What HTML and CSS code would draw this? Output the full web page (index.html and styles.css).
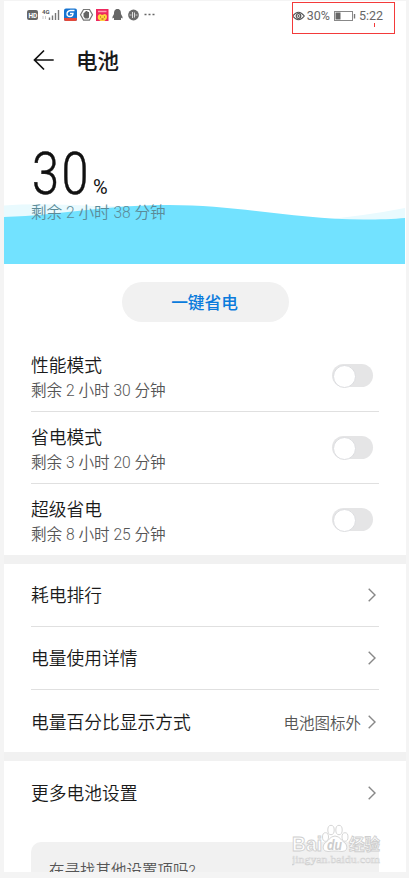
FILE: index.html
```html
<!DOCTYPE html>
<html lang="zh-CN">
<head>
  <meta charset="UTF-8">
  <meta name="viewport" content="width=device-width, initial-scale=1.0">
  <title>电池</title>
  <link rel="stylesheet" href="styles.css">
</head>
<body>
<div class="screen">

  <div class="status">
    <svg class="status-icons" width="130" height="16" viewBox="0 0 130 16">
      <rect x="0" y="3" width="11" height="10" rx="2" fill="#666"/>
      <text x="1.4" y="10.8" class="hd">HD</text>
      <text x="15" y="6.5" class="net">4G</text>
      <path d="M16 9v3M18.5 9v3" stroke="#ccc"/>
      <path d="M22.5 10.5v2.5M25.5 8.5v4.5M28.5 6v7M31.5 3v10" stroke="#777" stroke-width="1.4"/>
      <rect x="37" y="1.500" width="13" height="12.500" rx="2" fill="#1674d1"/>
      <path d="M37 11h13v1.500q0 1.500-2 1.500h-9q-2 0-2-1.500z" fill="#e2493b"/>
      <path d="M47.500 3.500h-4q-3.500.5-3.500 3.500 0 2.500 3 2.500 3 0 3-3h-3" fill="none" stroke="#fff" stroke-width="1.300"/>
      <path d="M56.500 2.500h6l3 5.300-3 5.300h-6l-3-5.300z" fill="none" stroke="#777" stroke-width="1.200"/>
      <path d="M56.500 6h1V5h1V4h2v1h1.500v5.500l-1 1h-3l-1.500-2z" fill="#666"/>
      <rect x="69" y="2" width="12.500" height="12" fill="#ee285f"/>
      <path d="M71 4.500h8.500" stroke="#ff9fb4" stroke-width="1.500"/>
      <path d="M71 12q-1-4 2-5l2 1 3-1q3 1 1.500 5l-2 2h-4z" fill="#ffd43d"/>
      <path d="M73 10h1M77 10h1M74.500 12h2" stroke="#a34917"/>
      <path d="M90.500 2c-3 0-3.500 2.500-3.500 5q-2 3-1.500 4.500l1.500-.8v2.300h7v-2.300l1.500.8Q96 10 94 7c0-2.500-.5-5-3.500-5z" fill="#666"/>
      <circle cx="106.500" cy="8" r="5.400" fill="#6b6b6b"/>
      <path d="M102.500 8h2M108.500 8h2" stroke="#ccc"/>
      <path d="M105.500 5v6M107.500 5.500v5" stroke="#ddd"/>
      <path d="M117.500 7.500h2M121.500 7.500h2M125.500 7.500h2" stroke="#666" stroke-width="1.700"/>
    </svg>
    <div class="status-right">
      <svg width="13" height="12" viewBox="0 0 13 12" fill="none" stroke="#555">
        <path d="M.7 6Q6.500-1.500 12.300 6 6.500 13.500.7 6z" stroke-width="1.200"/>
        <circle cx="6.500" cy="6" r="2.300" stroke-width="1.200"/>
        <circle cx="6.500" cy="6" r="1" fill="#555" stroke="none"/>
      </svg>
      <span class="percent">30%</span>
      <svg width="22" height="10" viewBox="0 0 22 10">
        <rect x=".5" y=".5" width="18" height="9" fill="#fff" stroke="#888"/>
        <path d="M1.500 1.500h5v7h-5z" fill="#666"/>
        <path d="M20.500 3v4.500" stroke="#777" stroke-width="1.400"/>
      </svg>
      <span class="clock">5:22</span>
    </div>
    <div class="mark"></div>
  </div>

  <header class="header">
    <svg width="22" height="22" viewBox="0 0 22 22" fill="none" stroke="#111" stroke-width="1.700">
      <path d="M20.700 11H2M11 1.500L1.500 11l9.500 9.500"/>
    </svg>
    <h1>电池</h1>
  </header>

  <section class="level">
    <svg class="wave" width="401" height="64" viewBox="0 0 401 64">
      <path d="M0 5.500Q35 3 90 6l76 1L0 22z" fill="#e9fafe"/>
      <path d="M315 20Q360 16 401 8v14h-86z" fill="#e9fafe"/>
      <path d="M0 17C60 15 100 5 165 5 235 5 290 19.500 360 19.500 375 19.500 390 19 401 18V64H0z" fill="#72e2ff"/>
    </svg>
    <div class="number"><span class="big">30</span><span class="unit">%</span></div>
    <div class="left">剩余 2 小时 38 分钟</div>
  </section>

  <section class="modes">
    <button class="save">一键省电</button>
    <div class="mode">
      <div class="info">
        <div class="name">性能模式</div>
        <div class="time">剩余 2 小时 30 分钟</div>
      </div>
      <span class="switch"></span>
    </div>
    <div class="mode">
      <div class="info">
        <div class="name">省电模式</div>
        <div class="time">剩余 3 小时 20 分钟</div>
      </div>
      <span class="switch"></span>
    </div>
    <div class="mode">
      <div class="info">
        <div class="name">超级省电</div>
        <div class="time">剩余 8 小时 25 分钟</div>
      </div>
      <span class="switch"></span>
    </div>
  </section>

  <section class="list">
    <div class="row">
      <span class="name">耗电排行</span>
      <svg class="arrow" viewBox="0 0 8 14"><path d="M.7.700L7 7 .7 13.300"/></svg>
    </div>
    <div class="row">
      <span class="name">电量使用详情</span>
      <svg class="arrow" viewBox="0 0 8 14"><path d="M.7.700L7 7 .7 13.300"/></svg>
    </div>
    <div class="row last">
      <span class="name">电量百分比显示方式</span>
      <span class="value">电池图标外</span>
      <svg class="arrow" viewBox="0 0 8 14"><path d="M.7.700L7 7 .7 13.300"/></svg>
    </div>
  </section>

  <section class="list">
    <div class="row last">
      <span class="name">更多电池设置</span>
      <svg class="arrow" viewBox="0 0 8 14"><path d="M.7.700L7 7 .7 13.300"/></svg>
    </div>
    <div class="hint">在寻找其他设置项吗?</div>
  </section>

  <svg class="watermark" width="92" height="44" viewBox="0 0 92 44">
    <g fill="#fff" stroke="#d6d6d6">
      <path d="M43 12q4 0 6.500 4l4.500 4q3 7-4 7.500-4-.5-7-.5t-7 .5q-7-.5-4-7.500l4.500-4q2.500-4 6.500-4z"/>
      <ellipse cx="33.500" cy="13" rx="3" ry="4.300"/>
      <ellipse cx="39" cy="6" rx="3.200" ry="4.700"/>
      <ellipse cx="47" cy="6" rx="3.200" ry="4.700"/>
      <ellipse cx="53" cy="13" rx="3" ry="4.300"/>
    </g>
    <text x="0" y="27" class="wm-bai" textLength="30" lengthAdjust="spacingAndGlyphs">Bai</text>
    <text x="35" y="25.500" class="wm-du" textLength="15" lengthAdjust="spacingAndGlyphs">du</text>
    <text x="57" y="25.500" class="wm-cn">经验</text>
    <text x="0" y="39" class="wm-url" textLength="88" lengthAdjust="spacingAndGlyphs">jingyan.baidu.com</text>
  </svg>
</div>
</body>
</html>
```
FILE: styles.css
```css
* {
  box-sizing: border-box;
}
body {
  margin: 0;
  height: 878px;
  padding: 1px 3px 6px 4px;
  background: #f4f4f4;
  font-family: Roboto, "Noto Sans CJK SC", sans-serif;
  color: #1a1a1a;
  overflow: hidden;
}
.screen {
  position: relative;
  height: 871px;
  background: #fff;
  overflow: hidden;
}
.status {
  position: relative;
  display: flex;
  justify-content: space-between;
  align-items: center;
  height: 30px;
  padding: 0 23px 0 23px;
}
.status-icons {
  margin-bottom: 2px;
}
.hd {
  font-size: 6.5px;
  font-weight: 700;
  fill: #fff;
}
.net {
  font-size: 6px;
  font-weight: 700;
  fill: #555;
}
.status-right {
  display: flex;
  align-items: center;
  font-size: 12.500px;
  line-height: 16px;
  color: #666;
}
.percent {
  margin: 0 4px 0 2px;
}
.clock {
  margin-left: 3px;
}
.mark {
  position: absolute;
  left: 288px;
  top: 1px;
  width: 103px;
  height: 32px;
  border: 1px solid #f33a3a;
}
.mark::after {
  content: "";
  position: absolute;
  left: 81px;
  top: 20px;
  width: 1px;
  height: 4px;
  background: #f33a3a;
}
.header {
  display: flex;
  align-items: center;
  height: 58px;
  padding-left: 29px;
}
h1 {
  margin: 4px 0 0 21px;
  font-size: 21.500px;
  font-weight: 500;
  line-height: 30px;
}
.level {
  position: relative;
  height: 175px;
  padding: 59px 0 0 27px;
}
.wave {
  position: absolute;
  left: 0;
  bottom: 0;
}
.number {
  position: relative;
  display: flex;
  align-items: baseline;
  height: 50px;
  line-height: 50px;
  color: #111;
}
.big {
  width: 62px;
  margin-top: 1px;
  font-size: 60px;
  font-weight: 300;
  letter-spacing: 3px;
  transform: translateX(1px) scaleX(.81);
  transform-origin: left;
  -webkit-text-stroke: .5px #111;
}
.unit {
  font-size: 20px;
}
.left,
.time {
  position: relative;
  font-size: 15.600px;
  font-weight: 350;
  line-height: 22px;
  color: #555;
}
.left {
  margin-top: 4px;
  color: #5b8b98;
}
.modes {
  height: 291px;
  padding: 18px 27px 0;
}
.save {
  display: block;
  width: 167px;
  height: 40px;
  margin: 0 0 18px 91px;
  padding: 2px 2px 0 0;
  border: 0;
  border-radius: 20px;
  background: #f1f1f1;
  font: 500 16.700px/40px Roboto, "Noto Sans CJK SC", sans-serif;
  color: #0a7bdc;
}
.mode {
  display: flex;
  justify-content: space-between;
  align-items: center;
  height: 72px;
  border-bottom: 1px solid #e0e0e0;
  padding-right: 6px;
}
.mode:last-child {
  height: 71px;
  border: 0;
}
.info {
  padding-top: 3px;
}
.name {
  font-size: 17.750px;
  font-weight: 350;
  line-height: 26px;
}
.mode .time {
  padding-top: 1px;
}
.switch {
  width: 41px;
  height: 23px;
  border-radius: 12px;
  padding: 1px;
  background: #e5e5e6;
}
.switch::before {
  content: "";
  display: block;
  width: 21px;
  height: 21px;
  border: 1px solid #dcdde0;
  border-radius: 50%;
  background: #fff;
}
.list {
  border-top: 9px solid #f1f1f1;
  padding: 0 27px;
}
.row {
  display: flex;
  align-items: center;
  height: 63px;
  border-bottom: 1px solid #e0e0e0;
}
.row.last {
  height: 62px;
  padding-top: 1px;
  border: 0;
}
.row .name {
  flex: 1;
  padding-top: 2px;
}
.value {
  margin-right: 7px;
  font-size: 15.500px;
  font-weight: 350;
  color: #555;
}
.arrow {
  width: 8px;
  height: 14px;
  margin-right: 3px;
  fill: none;
  stroke: #888;
  stroke-width: 1.400;
}
.hint {
  height: 60px;
  margin-top: 19px;
  padding: 17px 18px;
  border-radius: 10px;
  background: #f1f1f1;
  font-size: 15.500px;
  font-weight: 350;
  line-height: 24px;
  color: #555;
}
.watermark {
  position: absolute;
  left: 288px;
  top: 823px;
}
.wm-bai,
.wm-cn,
.wm-url {
  fill: #fff;
  stroke: #cfcfcf;
  stroke-width: .9;
}
.wm-bai {
  font: 700 20px "Liberation Sans", sans-serif;
}
.wm-du {
  font: italic 700 14px "Liberation Sans", sans-serif;
  fill: #ccc;
}
.wm-cn {
  font: 700 15.500px "Noto Sans CJK SC", sans-serif;
}
.wm-url {
  font: 11px "Liberation Serif", serif;
  stroke-width: .5;
}
```
